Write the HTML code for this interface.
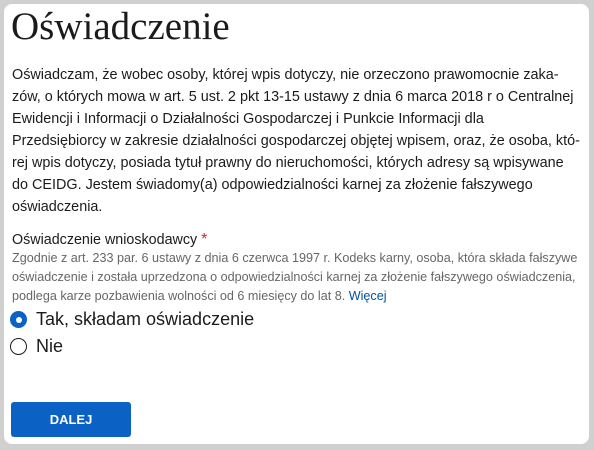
<!DOCTYPE html>
<html><head><meta charset="utf-8"><style>
html,body{margin:0;padding:0;width:594px;height:450px;background:#d0d0d0;overflow:hidden}
.card{position:absolute;left:4px;top:4px;width:585px;height:440px;background:#fff;border-radius:8px}
.t{position:absolute;left:8px;white-space:nowrap}
h1{position:absolute;left:7px;top:1px;margin:0;font:39px/44px "Liberation Serif",serif;color:#1b1b1b;font-weight:normal}
.p{top:60px;font:14.4px/22px "Liberation Sans",sans-serif;color:#1b1b1b}
.lab{top:226px;font:14.3px/20px "Liberation Sans",sans-serif;color:#1b1b1b}
.lab b{color:#d4213d;font-weight:normal;font-size:16px}
.h{top:245px;font:12.6px/19px "Liberation Sans",sans-serif;color:#666}
.h a{color:#0052a5;text-decoration:none}
.r{font:18px/24px "Liberation Sans",sans-serif;color:#1b1b1b;left:6px}
.rad{display:inline-block;width:15px;height:15px;border-radius:50%;border:1.5px solid #1b1b1b;vertical-align:-3px;margin-right:9px;box-sizing:content-box}
.rad.on{border:1.5px solid #0b62c4;background:#0b62c4}
.rad.on::after{content:"";display:block;width:6px;height:6px;border-radius:50%;background:#fff;margin:4.5px}
.btn{position:absolute;left:7px;top:398px;width:120px;height:35px;background:#0b62c4;border-radius:3px;color:#fff;font:bold 13px/35px "Liberation Sans",sans-serif;text-align:center}
</style></head><body><div class="card">
<h1>Oświadczenie</h1>
<div class="t p">Oświadczam, że wobec osoby, której wpis dotyczy, nie orzeczono prawomocnie zaka-<br>zów, o których mowa w art. 5 ust. 2 pkt 13-15 ustawy z dnia 6 marca 2018 r o Centralnej<br>Ewidencji i Informacji o Działalności Gospodarczej i Punkcie Informacji dla<br>Przedsiębiorcy w zakresie działalności gospodarczej objętej wpisem, oraz, że osoba, któ-<br>rej wpis dotyczy, posiada tytuł prawny do nieruchomości, których adresy są wpisywane<br>do CEIDG. Jestem świadomy(a) odpowiedzialności karnej za złożenie fałszywego<br>oświadczenia.</div>
<div class="t lab">Oświadczenie wnioskodawcy <b>*</b></div>
<div class="t h">Zgodnie z art. 233 par. 6 ustawy z dnia 6 czerwca 1997 r. Kodeks karny, osoba, która składa fałszywe<br>oświadczenie i została uprzedzona o odpowiedzialności karnej za złożenie fałszywego oświadczenia,<br>podlega karze pozbawienia wolności od 6 miesięcy do lat 8. <a>Więcej</a></div>
<div class="t r" style="top:303px"><span class="rad on"></span>Tak, składam oświadczenie</div>
<div class="t r" style="top:330px"><span class="rad"></span>Nie</div>
<div class="btn">DALEJ</div>
</div></body></html>
